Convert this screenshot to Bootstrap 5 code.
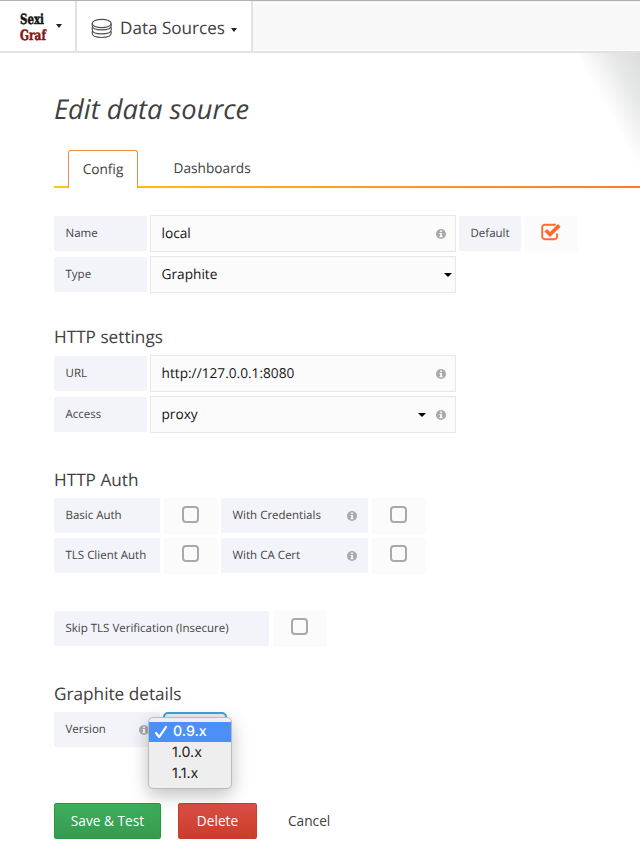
<!DOCTYPE html>
<html lang="en">
<head>
<meta charset="utf-8">
<meta name="viewport" content="width=device-width, initial-scale=1">
<title>Edit data source</title>
<link href="https://cdn.jsdelivr.net/npm/bootstrap@5.3.0/dist/css/bootstrap.min.css" rel="stylesheet">
<style>
body{font-family:"Open Sans","Noto Sans",sans-serif;color:#404040;background:#fff;height:867px;overflow:hidden;font-size:13.7px;line-height:20px;text-rendering:geometricPrecision}
.topnav{height:53px;background:#f8f8f8;border-top:1px solid #b2b2b2;border-bottom:2px solid #e2e2e2;box-shadow:inset 0 1px #eee,inset 0 2px #fff,inset 0 -1px #fff}
.brand-cell,.page-cell{background:#fff;border-right:2px solid #e2e2e2;height:50px}
.brand-cell{width:77px;padding-left:20px}
.brand-cell .caret{margin-left:8px}
.page-cell{width:176px;padding-left:14px;font-size:17.1px}
.page-cell .caret{margin:8px 0 0 6px}
.page-title{margin:5px 0 0 7px;width:105px;white-space:nowrap}
.logo-word{font:700 14px/15px "DejaVu Serif",serif;width:28px}
.logo-word svg{display:block;overflow:visible}
.caret{width:0;height:0;border:3px solid transparent;border-top:4px solid #222;border-bottom:0;display:block}
.caret-lg{border-width:4px 4px 0;border-top-color:#000}
.page-glow{position:absolute;right:0;top:53px;width:66px;height:112px;background:linear-gradient(241deg,#dcdddd 0,#e6e7e7 22%,#f6f6f6 39%,#fff 50%)}
main{padding-left:54px}
h1{font-size:27.3px;font-style:italic;font-weight:400;line-height:36px;margin:38px 0 0}
.tabline{height:38px;margin-top:23px;padding-left:14px;background:linear-gradient(90deg,#ffc41f,#ff7a2a) left bottom/100% 2px no-repeat}
.tabline .nav-link{font-size:13.7px;color:#404040;padding:0;height:38px;line-height:38px;border:0}
.tabline .nav-link.active{width:70px;text-align:center;background:#fff;border:solid #e98f4e;border-width:1px 1px 0;border-radius:3px 3px 0 0}
.tab-next{margin-left:35.5px}
h2{font-size:17.2px;font-weight:400;line-height:24px;margin:0;padding-top:1px;height:24px}
.field{gap:3px;height:37px;margin-bottom:4px}
.lbl{background:#f3f4f9;height:35px;padding:1px 11.5px 0 11.5px;font-size:11.5px;border-radius:2px;width:93px;color:#444}
.lbl-default{width:62px}
.ctl{width:306px;height:37px;border:1.5px solid #e8e8e8;background:#fbfbfb;padding:0 9px 0 10.5px;color:#151515}
.ctl .caret{margin-right:-6px}
.ctl .caret.near{margin-right:10px}
.tick{width:54px;height:36px;background:#fbfbfb;padding-bottom:4px}
.box{width:17px;height:17px;border:2px solid #a9a9a9;border-radius:4px}
.auth{gap:3.5px;height:35px;margin-bottom:4.5px}
.w-a{width:106px}.w-b{width:147px}.w-c{width:215px}
.ver{position:relative;height:35px;margin-top:6px}
.peek{width:64px;height:20px;border:2px solid #3ba4d6;border-radius:5px;background:#eee;margin-left:3px}
.version-menu{position:absolute;left:94px;top:5px;width:84px;height:72px;padding:4px 0 0;font-family:Inter,sans-serif;font-size:14.2px;line-height:21.5px;color:#222;background:#eee;border:1px solid #bbb;border-radius:5px;box-shadow:0 6px 18px rgba(0,0,0,.25)}
.version-menu div{padding-left:23px;height:20.5px}
.version-menu .chosen{background:#4a90f7;color:#fff;padding-left:5px;font-weight:500}
.btn{--bs-btn-font-size:13.7px;height:36px;padding:1px 0 0;border-radius:2px;font-weight:500}
.btn-save{width:107px;color:#fff;background:linear-gradient(#3daf5b,#369a50);border:1px solid #239b40}
.btn-del{width:79px;color:#fff;background:linear-gradient(#d94f43,#cb3c2b);border:1px solid #cd3a2c}
.btn.btn-link{color:#404040;text-decoration:none;font-weight:400;margin-left:13px}
.sec-1{margin-top:27px}.sec-2{margin-top:32px}.sec-3{margin-top:35px}.sec-4{margin-top:36px}
.first{margin-top:6px}
.skip{margin-top:38px}
.actions{margin-top:56px;gap:17px}
</style>
</head>
<body>
<svg width="0" height="0" class="position-absolute">
<symbol id="info" viewBox="0 0 10 10"><circle cx="5" cy="5" r="5" fill="#aaa"/><path d="M4.2 1.5h1.7v1.4H4.2zM3.4 4h2.5v3.2h.7v1H3.4v-1h.8V5h-.8z" fill="#fff"/></symbol>
</svg>
<nav class="topnav d-flex">
<div class="brand-cell d-flex align-items-center"><div class="logo-word"><svg width="28" height="31"><text x="0" y="13" textLength="24" lengthAdjust="spacingAndGlyphs" fill="#111" stroke="#111" stroke-width=".5">Sexi</text><text x="0" y="28.500" textLength="26" lengthAdjust="spacingAndGlyphs" fill="#851414" stroke="#851414" stroke-width=".5">Graf</text></svg></div><i class="caret"></i></div>
<div class="page-cell d-flex align-items-center">
<svg class="mt-1" width="22" height="21" viewBox="0 0 22 21" fill="none" stroke="#505050" stroke-width="1.1"><ellipse cx="10.7" cy="5.500" rx="9.500" ry="4.100"/><path d="M1.200 5.500v2.200c0 5.500 19 5.500 19 0V5.500M1.200 9.300v2.400c0 5.500 19 5.500 19 0V9.300M1.200 13.300v2c0 5.500 19 5.500 19 0v-2"/></svg>
<span class="page-title">Data Sources</span><i class="caret"></i></div>
</nav>
<div class="page-glow"></div>
<main>
<h1>Edit data source</h1>
<div class="tabline nav"><a class="nav-link active">Config</a><a class="nav-link tab-next">Dashboards</a></div>

<section class="sec-1">
<div class="field d-flex align-items-center"><div class="lbl d-flex align-items-center">Name</div><div class="ctl d-flex align-items-center justify-content-between">local<svg width="10" height="10"><use href="#info"/></svg></div><div class="lbl lbl-default d-flex align-items-center">Default</div><div class="tick d-flex align-items-center justify-content-center"><svg width="20" height="18" viewBox="0 0 20 18" fill="none" stroke="#ff6a2c"><path d="M14.800 1.700H4A2.600 2.600 0 0 0 1.200 4.300v9.200A2.600 2.600 0 0 0 3.900 16.200h9.500a2.600 2.600 0 0 0 2.600-2.700v-3" stroke-width="1.900"/><path d="M4.700 7.200l4.300 4.300L18.300 2.400" stroke-width="3.700"/></svg></div></div>
<div class="field d-flex align-items-center"><div class="lbl d-flex align-items-center">Type</div><div class="ctl d-flex align-items-center justify-content-between">Graphite<i class="caret caret-lg"></i></div></div>
</section>

<section class="sec-2"><h2>HTTP settings</h2>
<div class="field first d-flex align-items-center"><div class="lbl d-flex align-items-center">URL</div><div class="ctl d-flex align-items-center justify-content-between">http://127.0.0.1:8080<svg width="10" height="10"><use href="#info"/></svg></div></div>
<div class="field d-flex align-items-center"><div class="lbl d-flex align-items-center">Access</div><div class="ctl d-flex align-items-center">proxy<i class="caret caret-lg near ms-auto"></i><svg width="10" height="10"><use href="#info"/></svg></div></div>
</section>

<section class="sec-3"><h2>HTTP Auth</h2>
<div class="auth first d-flex"><div class="lbl w-a d-flex align-items-center">Basic Auth</div><div class="tick d-flex align-items-center justify-content-center"><i class="box"></i></div><div class="lbl w-b d-flex align-items-center justify-content-between">With Credentials<svg width="10" height="10"><use href="#info"/></svg></div><div class="tick d-flex align-items-center justify-content-center"><i class="box"></i></div></div>
<div class="auth d-flex"><div class="lbl w-a d-flex align-items-center text-nowrap">TLS Client Auth</div><div class="tick d-flex align-items-center justify-content-center"><i class="box"></i></div><div class="lbl w-b d-flex align-items-center justify-content-between">With CA Cert<svg width="10" height="10"><use href="#info"/></svg></div><div class="tick d-flex align-items-center justify-content-center"><i class="box"></i></div></div>
<div class="auth skip d-flex"><div class="lbl w-c d-flex align-items-center">Skip TLS Verification (Insecure)</div><div class="tick d-flex align-items-center justify-content-center"><i class="box"></i></div></div>
</section>

<section class="sec-4"><h2>Graphite details</h2>
<div class="ver d-flex"><div class="lbl w-a d-flex align-items-center justify-content-between">Version<svg width="10" height="10"><use href="#info"/></svg></div><div class="peek"></div>
<div class="version-menu"><div class="chosen d-flex align-items-center"><svg width="15" height="14" viewBox="0 0 15 14" fill="none" stroke="#fff" stroke-width="2.200" stroke-linecap="round" stroke-linejoin="round"><path d="M2 8l3.200 4L12 2"/></svg><span class="ms-1">0.9.x</span></div><div>1.0.x</div><div>1.1.x</div></div></div>
</section>
<div class="actions d-flex"><button class="btn btn-save">Save &amp; Test</button><button class="btn btn-del">Delete</button><button class="btn btn-link">Cancel</button></div>
</main>
<script src="https://cdn.jsdelivr.net/npm/bootstrap@5.3.0/dist/js/bootstrap.bundle.min.js"></script>
</body>
</html>
